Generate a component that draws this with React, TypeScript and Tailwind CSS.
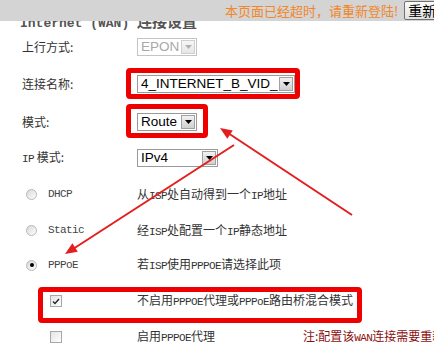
import React from "react";

const CJK = "font-['Noto_Sans_CJK_SC',sans-serif]";

function M({ children }: { children: React.ReactNode }) {
  return <span className="font-['Liberation_Mono',monospace] text-[11px] tracking-[-0.6px]">{children}</span>;
}

function Sel({ w, text, disabled }: { w: string; text: string; disabled?: boolean }) {
  return (
    <div
      className={`flex h-[18px] shrink-0 items-center justify-between border bg-white ${w} ${
        disabled ? "border-[#c4c4c4]" : "border-[#9a9a9a]"
      }`}
    >
      <span
        className={`pl-[3px] font-['Liberation_Sans',sans-serif] text-[13.5px] leading-none whitespace-nowrap ${
          disabled ? "text-[#a8a8a8]" : "text-black"
        }`}
      >
        {text}
      </span>
      <div
        className={`mr-[1px] flex h-[14px] w-[14px] items-center justify-center border bg-gradient-to-b ${
          disabled ? "border-[#cfcfcf] from-[#f6f6f6] to-[#e6e6e6]" : "border-[#a0a0a0] from-[#f2f2f2] to-[#cfcfcf]"
        }`}
      >
        <svg width="7" height="4" viewBox="0 0 7 4">
          <polygon points="0,0 7,0 3.5,4" fill={disabled ? "#b0b0b0" : "#000"} />
        </svg>
      </div>
    </div>
  );
}

function Radio({ checked }: { checked?: boolean }) {
  return (
    <div className="flex h-[11px] w-[11px] shrink-0 items-center justify-center rounded-full border border-[#b8b8b8] bg-gradient-to-br from-[#d8d8d8] to-[#ffffff]">
      {checked && <div className="h-[4px] w-[4px] rounded-full bg-black" />}
    </div>
  );
}

function Check({ checked }: { checked?: boolean }) {
  return (
    <div className="flex h-[12px] w-[12px] items-center justify-center border border-[#a8a8a8] bg-gradient-to-br from-[#e4e4e4] to-[#ffffff]">
      {checked && (
        <svg width="8" height="7" viewBox="0 0 8 7">
          <path d="M1 3.5 L3 5.5 L7 1" stroke="#222" strokeWidth="1.3" fill="none" />
        </svg>
      )}
    </div>
  );
}

const radioLabel = "ml-[11px] font-['Liberation_Mono',monospace] text-[11px] tracking-[-0.6px] text-[#444]";

export default function App() {
  return (
    <div className={`relative h-[354px] w-[434px] overflow-hidden bg-white text-[12px] text-[#333] ${CJK}`}>
      {/* title (partly hidden) */}
      <div className="h-[29px] pl-[20px] pt-[13px] text-[15px] font-bold leading-[15px] whitespace-nowrap text-[#555]">
        <span className="font-['Liberation_Mono',monospace] text-[13px]">Internet (WAN) </span>
        连接设置
      </div>

      <div className="flex flex-col">
        <div className="flex h-[36px] items-center">
          <div className="w-[137px] shrink-0 pl-[22px]">上行方式:</div>
          <Sel w="w-[60px]" text="EPON" disabled />
        </div>
        <div className="flex h-[38px] items-center">
          <div className="w-[137px] shrink-0 pl-[22px]">连接名称:</div>
          <Sel w="w-[158px]" text="4_INTERNET_B_VID_" />
        </div>
        <div className="flex h-[37px] items-center">
          <div className="w-[137px] shrink-0 pl-[22px]">模式:</div>
          <Sel w="w-[60px]" text="Route" />
        </div>
        <div className="flex h-[36px] items-center">
          <div className="w-[137px] shrink-0 pl-[22px]">
            <M>IP</M> 模式:
          </div>
          <Sel w="w-[81px]" text="IPv4" />
        </div>
        <div className="flex h-[37px] items-center">
          <div className="flex w-[137px] shrink-0 items-center pl-[26px]">
            <Radio />
            <span className={radioLabel}>DHCP</span>
          </div>
          <div className="whitespace-nowrap">
            从<M>ISP</M>处自动得到一个<M>IP</M>地址
          </div>
        </div>
        <div className="flex h-[35px] items-center">
          <div className="flex w-[137px] shrink-0 items-center pl-[26px]">
            <Radio />
            <span className={radioLabel}>Static</span>
          </div>
          <div className="whitespace-nowrap">
            经<M>ISP</M>处配置一个<M>IP</M>静态地址
          </div>
        </div>
        <div className="flex h-[34px] items-center">
          <div className="flex w-[137px] shrink-0 items-center pl-[26px]">
            <Radio checked />
            <span className={radioLabel}>PPPoE</span>
          </div>
          <div className="whitespace-nowrap">
            若<M>ISP</M>使用<M>PPPOE</M>请选择此项
          </div>
        </div>
        <div className="flex h-[38px] items-center">
          <div className="w-[137px] shrink-0 pl-[50px]">
            <Check checked />
          </div>
          <div className="whitespace-nowrap">
            不启用<M>PPPOE</M>代理或<M>PPPoE</M>路由桥混合模式
          </div>
        </div>
        <div className="flex h-[34px] items-center">
          <div className="w-[137px] shrink-0 pl-[50px]">
            <Check />
          </div>
          <div className="w-[166px] shrink-0 whitespace-nowrap">
            启用<M>PPPOE</M>代理
          </div>
          <div className="shrink-0 whitespace-nowrap text-[#8b1010]">
            注:配置该<M>WAN</M>连接需要重新启动
          </div>
        </div>
      </div>

      {/* header overlay */}
      <div className="absolute left-0 right-0 top-0 z-10 flex h-[21px] items-center overflow-hidden bg-[#d4d4d4] pl-[225px]">
        <span className="shrink-0 whitespace-nowrap text-[13px] leading-none text-[#f0872a]">本页面已经超时，请重新登陆!</span>
        <div className="ml-[6px] flex h-[19px] shrink-0 items-center rounded-[2px] border border-[#707070] bg-gradient-to-b from-[#fafafa] to-[#e2e2e2] pl-[3px] pr-[6px] text-[14px] whitespace-nowrap text-black">
          重新登陆
        </div>
      </div>

      {/* annotation boxes */}
      <div className="absolute left-[126px] top-[68px] h-[31px] w-[174px] rounded-[4px] border-[5px] border-[#ee0000]" />
      <div className="absolute left-[126px] top-[104px] h-[34px] w-[82px] rounded-[4px] border-[5px] border-[#ee0000]" />
      <div className="absolute left-[38px] top-[287px] h-[36px] w-[324px] rounded-[4px] border-[5px] border-[#ee0000]" />

      <svg className="pointer-events-none absolute left-0 top-0" width="434" height="354" viewBox="0 0 434 354">
        <line x1="352" y1="215" x2="228" y2="133" stroke="#e41e1e" strokeWidth="2" />
        <polygon points="220,128 227.3,138.8 232.8,130.4" fill="#e41e1e" />
        <line x1="234" y1="145" x2="73" y2="249" stroke="#e41e1e" strokeWidth="2" />
        <polygon points="65,254 77.8,251.7 72.4,243.3" fill="#e41e1e" />
      </svg>
    </div>
  );
}
